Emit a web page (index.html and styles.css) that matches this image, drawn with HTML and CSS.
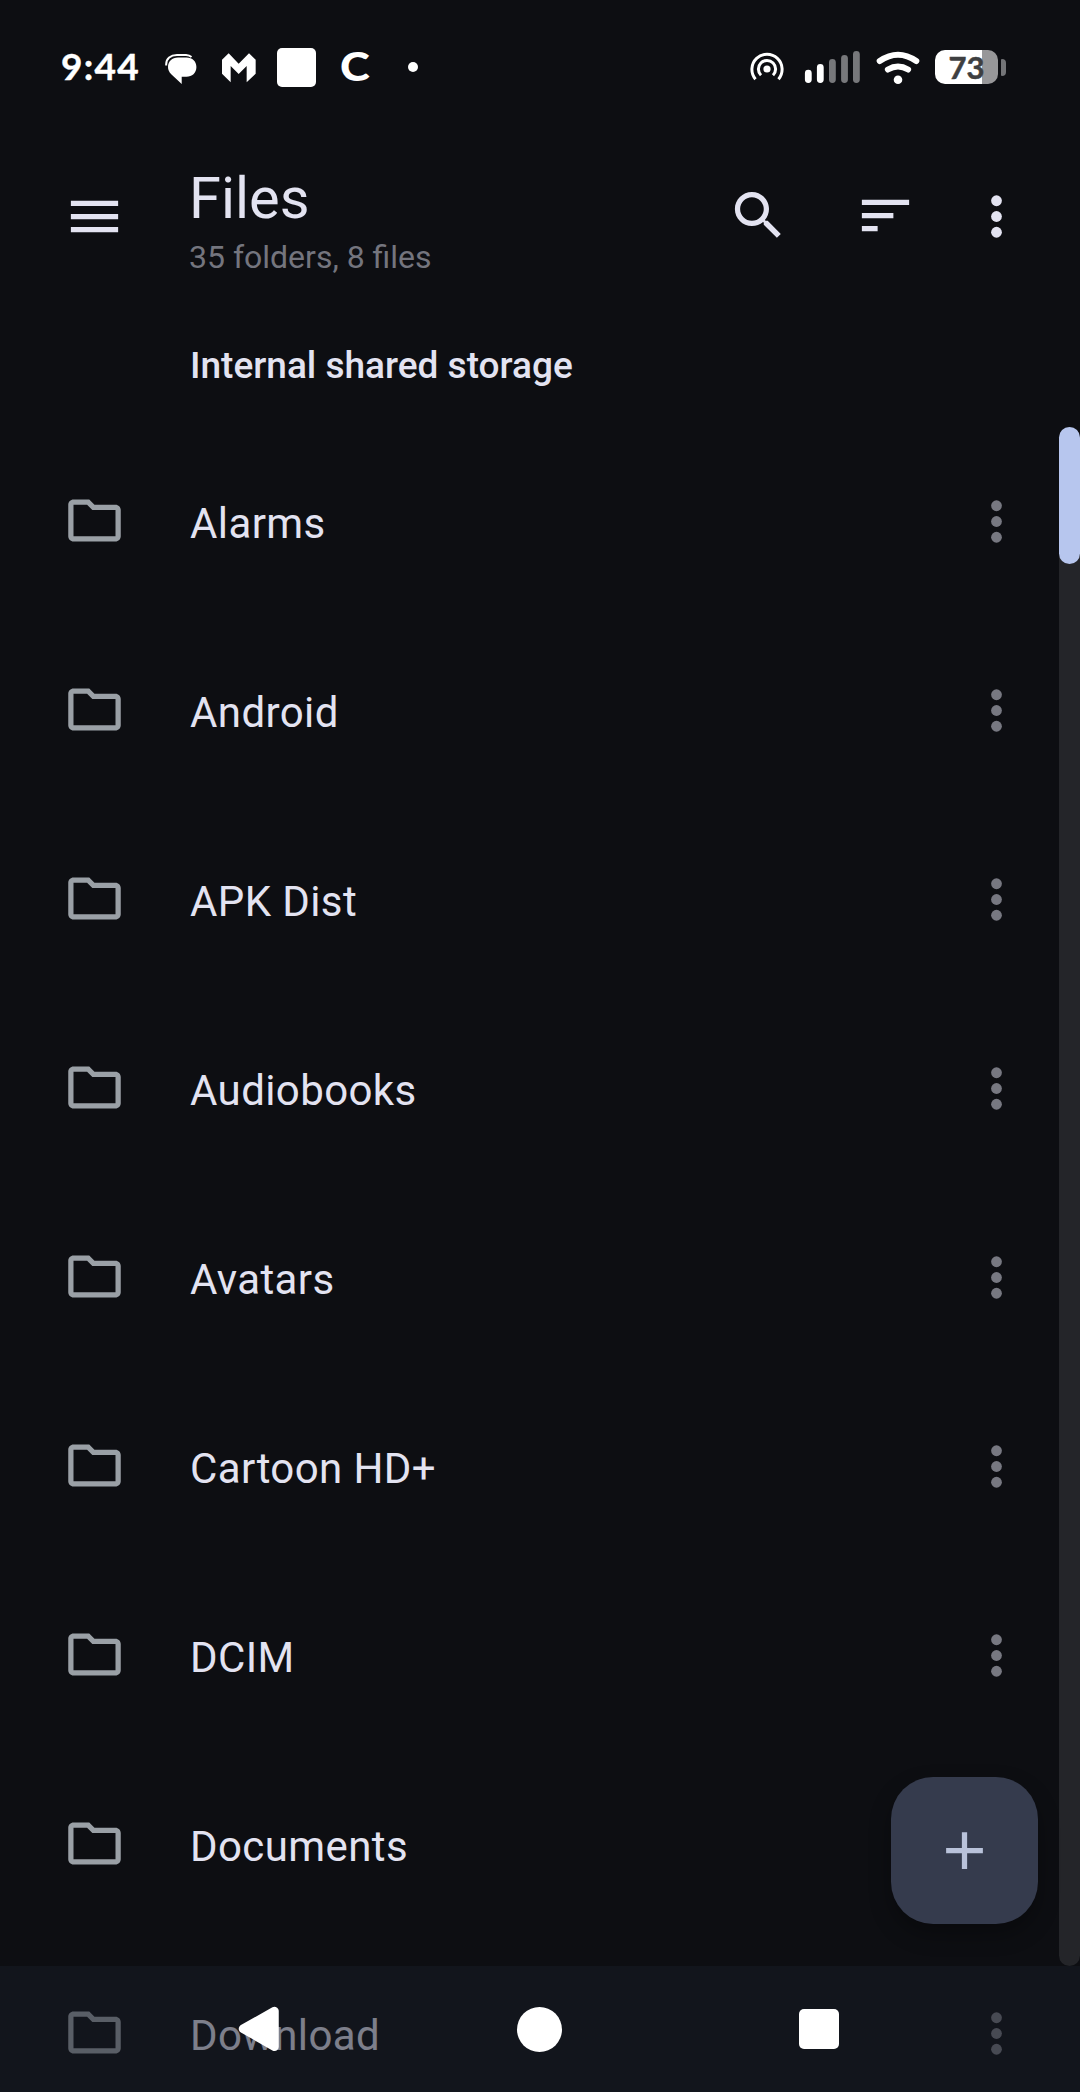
FILE: index.html
```html
<!DOCTYPE html>
<html lang="en">
<head>
<meta charset="utf-8">
<title>Files</title>
<link rel="stylesheet" href="styles.css">
</head>
<body>
<svg class="symbols" width="0" height="0" aria-hidden="true">
  <symbol id="folder" viewBox="0 0 24 24"><path d="M9.17 6l2 2H20v10H4V6h5.17M10 4H4c-1.1 0-2 .9-2 2v12c0 1.1.9 2 2 2h16c1.1 0 2-.9 2-2V8c0-1.1-.9-2-2-2h-8l-2-2z"/></symbol>
  <symbol id="more" viewBox="0 0 24 24"><circle cx="12" cy="6" r="2.05"/><circle cx="12" cy="12" r="2.05"/><circle cx="12" cy="18" r="2.05"/></symbol>
</svg>
<div class="screen">
  <header class="status">
    <span class="clock">9:44</span>
    <svg class="s-chat" width="32" height="32" viewBox="165 53 32 32"><path d="M166.200 65.500 C165.700 58 171 55 177 55 H186 Q189.500 55.300 191.500 57" fill="none" stroke="#fff" stroke-width="2"/><path d="M178 57.500 H186.500 C192.500 57.500 196.400 61.500 196.400 67 C196.400 73 192 76.800 186.500 76.800 H181.700 V84 L171.500 74.500 C169 72 168 69.500 168 67 C168 61.500 172 57.500 178 57.500Z"/></svg>
    <svg class="s-mark" width="34" height="30" viewBox="547 68 102 90"><path d="M547 88L567 69 597 100 628 69 648 88V130L621 156V107L597 131 573 107V156L547 130Z"/></svg>
    <span class="s-square"></span>
    <span class="s-c">C</span>
    <span class="s-dot"></span>
    <span class="spacer"></span>
    <svg class="s-hotspot" width="36" height="36" viewBox="-18 -18 36 36"><circle r="3.6"/><g fill="none" stroke="#fff" stroke-width="3"><path d="M-11.500 10.200A15.100 15.100 0 1 1 11.500 10.200"/><path d="M-6 6.200A8.600 8.600 0 1 1 6 6.200"/></g></svg>
    <svg class="s-signal" width="56" height="34" viewBox="804 50 56 34"><g fill="none" stroke="#fff" stroke-width="6.800" stroke-linecap="round"><path d="M808.300 73.200V79.600M820.300 67.500V79.600"/><path stroke="#77787b" d="M832.400 62.300V79.600M844.500 58.300V79.600M856.400 54.300V79.600"/></g></svg>
    <svg class="s-wifi" width="44" height="34" viewBox="875.500 50.500 44 34"><circle cx="897.500" cy="79.300" r="4.300"/><g fill="none" stroke="#fff" stroke-width="6" stroke-linecap="round"><path d="M879.200 60.500Q897.500 48 915.800 60.500"/><path d="M887.400 69Q897.500 63 907.600 69"/></g></svg>
    <span class="battery"><span class="level">73</span><span class="tip"></span></span>
  </header>

  <div class="appbar">
    <svg class="icon menu" viewBox="0 0 24 24"><path d="M3 18h18v-2H3v2zm0-5h18v-2H3v2zm0-7v2h18V6H3z"/></svg>
    <div class="titles">
      <h1 class="title">Files</h1>
      <p class="subtitle">35 folders, 8 files</p>
    </div>
    <svg class="icon search" viewBox="0 0 24 24"><path d="M15.500 14h-.79l-.28-.27C15.410 12.590 16 11.110 16 9.500 16 5.910 13.090 3 9.500 3S3 5.910 3 9.500 5.910 16 9.500 16c1.610 0 3.090-.59 4.230-1.570l.27.28v.79l5 4.990L20.490 19l-4.990-5zm-6 0C7.010 14 5 11.990 5 9.500S7.010 5 9.500 5 14 7.010 14 9.500 11.990 14 9.500 14z"/></svg>
    <svg class="icon sort" viewBox="0 0 24 24"><path d="M3 18h6v-2H3v2zM3 6v2h18V6H3zm0 7h12v-2H3v2z"/></svg>
    <svg class="icon overflow"><use href="#more"/></svg>
  </div>

  <h2 class="section">Internal shared storage</h2>

  <ul class="list">
    <li class="row"><svg class="icon folder"><use href="#folder"/></svg><span class="name">Alarms</span><svg class="icon dots"><use href="#more"/></svg></li>
    <li class="row"><svg class="icon folder"><use href="#folder"/></svg><span class="name">Android</span><svg class="icon dots"><use href="#more"/></svg></li>
    <li class="row"><svg class="icon folder"><use href="#folder"/></svg><span class="name">APK Dist</span><svg class="icon dots"><use href="#more"/></svg></li>
    <li class="row"><svg class="icon folder"><use href="#folder"/></svg><span class="name">Audiobooks</span><svg class="icon dots"><use href="#more"/></svg></li>
    <li class="row"><svg class="icon folder"><use href="#folder"/></svg><span class="name">Avatars</span><svg class="icon dots"><use href="#more"/></svg></li>
    <li class="row"><svg class="icon folder"><use href="#folder"/></svg><span class="name">Cartoon HD+</span><svg class="icon dots"><use href="#more"/></svg></li>
    <li class="row"><svg class="icon folder"><use href="#folder"/></svg><span class="name">DCIM</span><svg class="icon dots"><use href="#more"/></svg></li>
    <li class="row"><svg class="icon folder"><use href="#folder"/></svg><span class="name">Documents</span></li>
    <li class="row"><svg class="icon folder"><use href="#folder"/></svg><span class="name">Download</span><svg class="icon dots"><use href="#more"/></svg></li>
  </ul>

  <div class="scrollbar"><div class="thumb"></div></div>
  <div class="fab"><svg class="icon" viewBox="0 0 24 24"><path d="M19 13h-6v6h-2v-6H5v-2h6V5h2v6h6v2z"/></svg></div>
  <nav class="navbar">
    <svg class="back" width="42" height="46" viewBox="238 2006.500 42 46"><path d="M243 2029.300L274.500 2011.500V2047.200Z" stroke="#fff" stroke-width="8.500" stroke-linejoin="round"/></svg>
    <span class="home"></span>
    <span class="recents"></span>
  </nav>
</div>
</body>
</html>
```
FILE: styles.css
```css
* { box-sizing: border-box; }
body { margin: 0; background: #0d0e12; }
.symbols { position: absolute; }
.screen {
  position: relative;
  width: 1080px;
  height: 2092px;
  overflow: hidden;
  background: #0d0e12;
  color: #e3e3f1;
  font-family: Roboto, sans-serif;
}
svg { display: block; flex: none; fill: #fff; }
.icon { width: 63px; height: 63px; fill: #e3e3f1; }

/* status bar */
.status {
  display: flex;
  align-items: center;
  height: 134px;
  padding: 0 74px 0 61px;
  color: #fff;
  font-family: Lato, sans-serif;
}
.status > * { flex: none; }
.clock { width: 104px; margin-top: -3px; font-size: 37px; font-weight: 700; line-height: 40px; -webkit-text-stroke: .4px #fff; letter-spacing: 1.3px; }
.s-chat { margin-top: 4px; }
.s-mark { margin: 1px 21px 0 25px; }
.s-square { width: 39px; height: 39px; margin-top: 1px; border-radius: 5px; background: #fff; }
.s-c { width: 27px; margin: -2px 0 0 24px; font-size: 40px; font-weight: 900; line-height: 40px; transform: scaleX(1.13); transform-origin: left; }
.s-dot { width: 10px; height: 10px; margin-left: 41px; border-radius: 50%; background: #fff; }
.status > .spacer { flex: 1; }
.s-hotspot { margin: 4px 19px 0 0; }
.s-signal { margin-right: 16px; }
.s-wifi { margin: 1px 15px 0 0; }
.battery { display: flex; align-items: center; gap: 3px; }
.level {
  width: 63px;
  height: 34px;
  border-radius: 10px;
  background: linear-gradient(90deg, #fff 47px, #979799 47px);
  color: #3e3f41;
  font-size: 31px;
  font-weight: 700;
  line-height: 34px;
  text-align: center;
  -webkit-text-stroke: .5px #3e3f41;
}
.tip { width: 5px; height: 17px; border-radius: 1px 4px 4px 1px; background: #737477; }

/* app bar */
.appbar { display: flex; align-items: flex-start; height: 165px; padding: 0 52px 0 63px; }
.appbar .menu { margin-top: 51px; }
.titles { flex: 1; padding: 30px 0 0 63px; }
.title { margin: 0; font-size: 57.750px; font-weight: 400; line-height: 68px; }
.subtitle { margin: 0; color: #74757e; font-size: 32px; line-height: 51px; }
.search { margin: 50px 64px 0 0; }
.sort { margin: 50px 48px 0 0; }
.overflow { margin-top: 51px; }

.section {
  height: 127px;
  margin: 0;
  padding: 6px 0 0 190px;
  font-size: 37px;
  font-weight: 500;
  line-height: 121px;
}

/* folder list */
.list { margin: 0; padding: 0; list-style: none; }
.row { display: flex; align-items: center; height: 189px; padding: 0 52px 0 63px; }
.row .folder { fill: #9aa0a6; }
.row .name { flex: 1; padding: 6px 0 0 64px; font-size: 42px; line-height: 52px; letter-spacing: .4px; }
.row .dots { margin-top: 2px; fill: #777881; }

/* overlays */
.scrollbar { position: absolute; top: 427px; right: 0; width: 21px; height: 1539px; border-radius: 10.5px; background: #242529; }
.thumb { height: 137px; border-radius: 10.5px; background: #b7c6ee; }
.fab {
  position: absolute;
  right: 42px;
  bottom: 168px;
  display: flex;
  align-items: center;
  justify-content: center;
  width: 147px;
  height: 147px;
  border-radius: 42px;
  background: #353b4d;
  box-shadow: 0 10px 22px rgba(0, 0, 0, .3);
}
.fab .icon { fill: #b9c2da; }
.navbar {
  position: absolute;
  right: 0;
  bottom: 0;
  left: 0;
  display: flex;
  align-items: center;
  height: 126px;
  padding-left: 238px;
  background: rgba(23, 28, 38, .5);
}
.home { width: 45px; height: 45px; margin-left: 237px; border-radius: 50%; background: #fff; }
.recents { width: 40px; height: 40px; margin-left: 237px; border-radius: 5px; background: #fff; }
```
